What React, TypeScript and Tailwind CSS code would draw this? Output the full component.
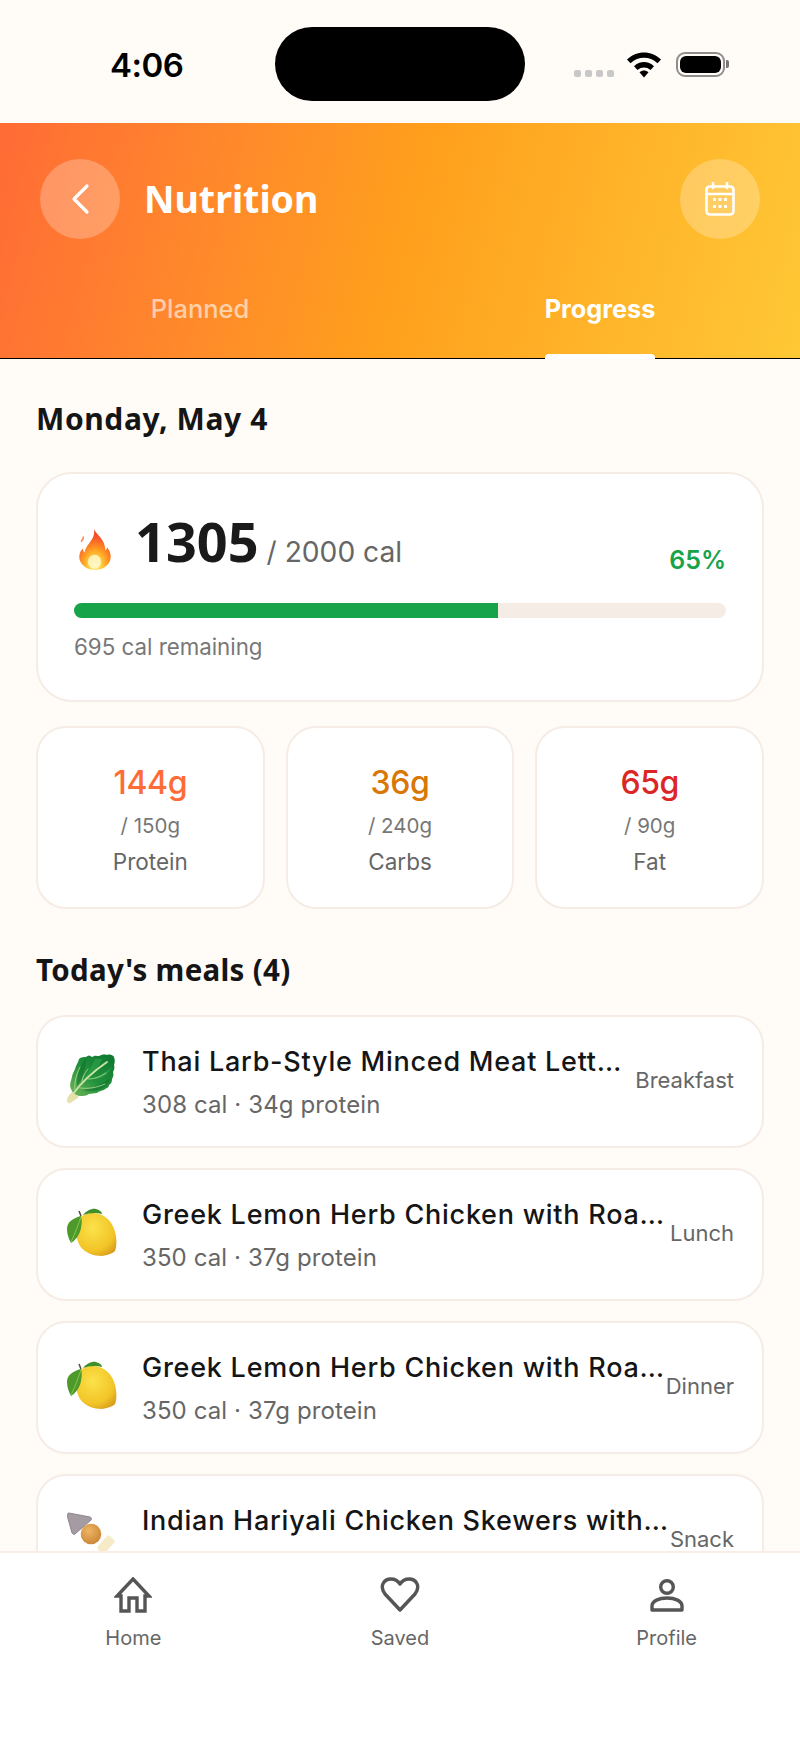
import React from "react";

const sans = "font-['Inter','Noto_Sans',sans-serif]";

function Flame() {
  return (
    <svg width="35" height="41" viewBox="0 0 33 40" className="shrink-0">
      <defs>
        <radialGradient id="fl" cx="0.5" cy="0.88" r="0.9">
          <stop offset="0" stopColor="#fff8c0" />
          <stop offset="0.2" stopColor="#ffd53f" />
          <stop offset="0.45" stopColor="#ff9a22" />
          <stop offset="0.75" stopColor="#f9532a" />
          <stop offset="1" stopColor="#f0381f" />
        </radialGradient>
      </defs>
      <path d="M16 0c2 5 8 8 10 15 1 3 1 5 1 6 1-1 2-3 2-3 3 4 4 8 3 12-2 6-8 10-15 10S4 36 2 30c-1-4 0-8 3-11 0 2 1 3 2 4 0-3 2-6 5-10 3-4 5-8 4-13z" fill="url(#fl)" />
      <path d="M5 7c0 2-2 3-2 6 2-1 4-3 3-6z" fill="#f8733c" opacity="0.8" />
      <ellipse cx="16.500" cy="32" rx="6.500" ry="7" fill="#fff7c8" opacity="0.85" />
    </svg>
  );
}

function Lettuce() {
  return (
    <svg width="52" height="52" viewBox="0 0 52 52" className="shrink-0">
      <defs>
        <linearGradient id="le" x1="0" y1="1" x2="1" y2="0">
          <stop offset="0" stopColor="#74b75a" />
          <stop offset="0.45" stopColor="#22923d" />
          <stop offset="1" stopColor="#0e7530" />
        </linearGradient>
      </defs>
      <path d="M5 36c-2-4 0-8 1-12 0-3 2-5 3-8 1-4 3-6 4-10 2-2 5-2 7-2 2-2 4-2 6 0 3-2 5-1 7-1 2-1 5-2 8-1 3-1 6 0 7 2 1 3 1 5 0 8 1 3 0 5-1 7 1 3 0 5-1 7 0 3-1 5-3 6 0 3-3 3-5 5-3 1-5 1-7 3-3 0-5 1-8 1-3 2-6 2-8 2-5 0-8-2-10-7z" fill="url(#le)" />
      <path d="M20 5c-6 7-9 16-9 28 5-6 9-17 9-28zM44 25c-7 6-17 10-27 12 10 3 23 1 27-12z" fill="#0f6f2c" opacity="0.55" />
      <path d="M29 6c-3 7-6 13-11 21 7-4 14-11 18-21zM46 14c-6 4-12 9-20 12 8 1 16-3 20-12z" fill="#2fa24b" opacity="0.6" />
      <path d="M7 41C15 30 25 20 41 9" stroke="#cbe5a6" strokeWidth="1.800" fill="none" strokeLinecap="round" />
      <path d="M9 38C8 30 10 22 14 14M16 31c0-6 2-10 6-15M22 26c6 0 12-2 18-6M14 35c8 1 16 0 25-4" stroke="#b5dc92" strokeWidth="1" fill="none" strokeLinecap="round" opacity="0.8" />
      <path d="M1 47c0-3 3-6 5-8l7 5c-3 2-7 5-9 6-2 1-3-1-3-3z" fill="#e6e0ac" />
    </svg>
  );
}

function Lemon({ id }: { id: string }) {
  return (
    <svg width="50" height="48" viewBox="0 0 50 48" className="shrink-0">
      <defs>
        <radialGradient id={id} cx="0.42" cy="0.35" r="0.75">
          <stop offset="0" stopColor="#fbe24a" />
          <stop offset="0.7" stopColor="#f2c527" />
          <stop offset="1" stopColor="#d79a1a" />
        </radialGradient>
      </defs>
      <path d="M11 12c5-7 16-9 24-5 8 4 13 12 14 22 1 6 0 11-1 14-3 3-8 4-13 5-8 0-17-3-22-10C9 31 7 19 11 12z" fill={`url(#${id})`} />
      <path d="M14 8C6 10 0 14 0 21c0 6 2 10 4 14 5-3 9-9 10-15 1-5 1-9 0-12z" fill="#4d9a2a" />
      <path d="M14 9C11 17 8 26 4 34" stroke="#8cc152" strokeWidth="1" fill="none" />
      <path d="M16 7c3-4 9-7 13-6 4 1 6 3 6 5-6-2-13-1-19 1z" fill="#3f8f2b" />
      <path d="M12 3l2 5" stroke="#5a4a30" strokeWidth="1.500" />
    </svg>
  );
}

function Skewer() {
  return (
    <svg width="50" height="52" viewBox="0 0 50 52" className="shrink-0">
      <defs>
        <radialGradient id="ba" cx="0.4" cy="0.35" r="0.7">
          <stop offset="0" stopColor="#efb466" />
          <stop offset="1" stopColor="#c98634" />
        </radialGradient>
      </defs>
      <path d="M2 1l21 4c1 0 2 2 1 3L8 22c-1 1-2 0-3-1L0 3c0-1 1-2 2-2z" fill="#a59ca3" stroke="#8f868e" strokeWidth="1" />
      <circle cx="24" cy="22" r="10.300" fill="url(#ba)" />
      <path d="M31 34l9-10c1-1 2-1 3 0l4 4c1 1 1 2 0 3l-9 10c-3 2-9-3-7-7z" fill="#f5ebc9" />
    </svg>
  );
}

function Meal({ icon, title, sub, tag }: { icon: React.ReactNode; title: string; sub: string; tag: string }) {
  return (
    <div className="flex items-center h-[133px] shrink-0 rounded-[30px] bg-white border-2 border-[#f5ece5] pl-[28px] pr-[28px]">
      <div className="w-[52px] mb-[5px] flex justify-center shrink-0">{icon}</div>
      <div className="ml-[24px] mt-[1px] flex-1 min-w-0 flex flex-col gap-[13px]">
        <div className="truncate text-[27px] leading-[32px] font-medium text-[#151515] tracking-[0.75px]">{title}</div>
        <div className="truncate text-[24px] leading-[28px] text-[#666] tracking-[0.1px]">{sub}</div>
      </div>
      <div className="shrink-0 mb-[3px] text-[22px] leading-[26px] text-[#666]">{tag}</div>
    </div>
  );
}

function Macro({ value, goal, label, color }: { value: string; goal: string; label: string; color: string }) {
  return (
    <div className="flex-1 h-[183px] rounded-[30px] bg-white border-2 border-[#f5ece5] flex flex-col items-center pt-[33px]">
      <div className={`text-[32px] leading-[44px] font-medium tracking-[-0.4px] ${color}`}>{value}</div>
      <div className="mt-[9px] text-[20.500px] leading-[24px] text-[#777]">{goal}</div>
      <div className="mt-[11px] text-[22.500px] leading-[26px] text-[#666]">{label}</div>
    </div>
  );
}

export default function App() {
  return (
    <div className={`w-[800px] h-[1739px] flex flex-col overflow-hidden bg-[#fffbf7] ${sans}`}>
      {/* status bar */}
      <div className="h-[123px] shrink-0 bg-[#fffcf8] relative flex items-start">
        <div className="ml-[110px] mt-[44px] text-[33px] leading-[42px] font-semibold text-black tracking-[-0.5px]">4:06</div>
        <div className="absolute left-[275px] top-[27px] w-[250px] h-[74px] rounded-[37px] bg-black" />
        <div className="absolute left-[574px] top-[70px] flex gap-[4px]">
          <div className="w-[7px] h-[7px] rounded-[2px] bg-[#c8c8c8]" />
          <div className="w-[7px] h-[7px] rounded-[2px] bg-[#c8c8c8]" />
          <div className="w-[7px] h-[7px] rounded-[2px] bg-[#c8c8c8]" />
          <div className="w-[7px] h-[7px] rounded-[2px] bg-[#c8c8c8]" />
        </div>
        <svg width="34" height="26" viewBox="0 0 34 26" className="absolute left-[627px] top-[52px]">
          <path d="M0 7.500C9.500-2 24.500-2 34 7.500l-3.500 3.800C22.500 4 11.500 4 3.500 11.300z" fill="#000" />
          <path d="M7 14.200c6-5.500 14-5.500 20 0l-3.500 3.800c-4-3.300-9-3.300-13 0z" fill="#000" />
          <path d="M12.500 20.300c3-2.300 6-2.300 9 0L17 25.500z" fill="#000" />
        </svg>
        <div className="absolute left-[676px] top-[52px] w-[49px] h-[25px] rounded-[9px] border-2 border-[#8e8e8e] p-[2px]">
          <div className="w-full h-full rounded-[6px] bg-black" />
        </div>
        <div className="absolute left-[726px] top-[60px] w-[3px] h-[8px] rounded-r-[2px] bg-[#777]" />
      </div>

      {/* header */}
      <div className="h-[236px] shrink-0 border-b border-black bg-linear-105 from-[#ff6b35] via-[#ff9f1c] to-[#ffc835] flex flex-col">
        <div className="flex items-center justify-between pl-[40px] pr-[40px] pt-[36px]">
          <div className="flex items-center gap-[24px]">
            <div className="w-[80px] h-[80px] rounded-full bg-white/25 flex items-center justify-center">
              <svg width="22" height="32" viewBox="0 0 22 32">
                <path d="M18 3L5 16l13 13" stroke="#fff" strokeWidth="3.200" fill="none" strokeLinecap="round" strokeLinejoin="round" />
              </svg>
            </div>
            <div className="font-['Noto_Sans',sans-serif] text-[37.500px] leading-[46px] font-bold text-white">Nutrition</div>
          </div>
          <div className="w-[80px] h-[80px] rounded-full bg-white/25 flex items-center justify-center">
            <svg width="30" height="34" viewBox="0 0 30 34" fill="none">
              <rect x="1.500" y="4.500" width="27" height="28" rx="3.500" stroke="#fff" strokeWidth="2.600" />
              <path d="M1.500 12h27M8 1v5M22 1v5" stroke="#fff" strokeWidth="2.600" strokeLinecap="round" />
              <g fill="#fff">
                <rect x="8" y="16" width="3" height="3" rx="0.500" />
                <rect x="13.500" y="16" width="3" height="3" rx="0.500" />
                <rect x="19" y="16" width="3" height="3" rx="0.500" />
                <rect x="8" y="23" width="3" height="3" rx="0.500" />
                <rect x="13.500" y="23" width="3" height="3" rx="0.500" />
                <rect x="19" y="23" width="3" height="3" rx="0.500" />
              </g>
            </svg>
          </div>
        </div>
        <div className="flex mt-[53px] flex-1">
          <div className="flex-1 flex flex-col items-center">
            <div className="text-[25.500px] leading-[34px] font-medium text-white/60">Planned</div>
          </div>
          <div className="flex-1 flex flex-col items-center relative">
            <div className="text-[25.300px] leading-[34px] font-bold text-white">Progress</div>
            <div className="absolute bottom-[-1px] w-[110px] h-[5px] bg-white rounded-t-[4px]" />
          </div>
        </div>
      </div>

      {/* content */}
      <div className="flex-1 min-h-0 overflow-hidden px-[36px] flex flex-col">
        <div className="mt-[42px] font-['Noto_Sans',sans-serif] text-[30px] leading-[36px] font-bold text-[#151515] tracking-[0.6px]">Monday, May 4</div>
        <div className="mt-[35px] h-[230px] shrink-0 rounded-[36px] bg-white border-2 border-[#f5ece5] px-[36px] pt-[37px]">
          <div className="flex items-start justify-between">
            <div className="flex items-start">
              <div className="ml-[3px] mt-[18px]">
                <Flame />
              </div>
              <div className="ml-[23px] flex items-baseline">
                <span className="font-['Noto_Sans',sans-serif] text-[54px] leading-[60px] font-bold text-[#1a1a1a]">1305</span>
                <span className="ml-[8px] text-[28.200px] leading-[32px] text-[#666]">/ 2000 cal</span>
              </div>
            </div>
            <div className="text-[25px] leading-[30px] font-semibold text-[#16a34a] mt-[34px]">65%</div>
          </div>
          <div className="mt-[28px] h-[15px] rounded-full bg-[#f5ece5] overflow-hidden">
            <div className="h-full bg-[#16a34a] w-[65%]" />
          </div>
          <div className="mt-[16px] text-[22.300px] leading-[26px] text-[#777]">695 cal remaining</div>
        </div>
        <div className="mt-[24px] flex gap-[21px] shrink-0">
          <Macro value="144g" goal="/ 150g" label="Protein" color="text-[#ff6b35]" />
          <Macro value="36g" goal="/ 240g" label="Carbs" color="text-[#d97706]" />
          <Macro value="65g" goal="/ 90g" label="Fat" color="text-[#dc2626]" />
        </div>
        <div className="mt-[43px] font-['Noto_Sans',sans-serif] text-[29.500px] leading-[36px] font-bold text-[#151515] tracking-[0.3px]">Today's meals (4)</div>
        <div className="mt-[27px] flex flex-col gap-[20px]">
          <Meal icon={<Lettuce />} title="Thai Larb-Style Minced Meat Lettuce Wraps" sub="308 cal · 34g protein" tag="Breakfast" />
          <Meal icon={<Lemon id="l1" />} title="Greek Lemon Herb Chicken with Roasted Veg" sub="350 cal · 37g protein" tag="Lunch" />
          <Meal icon={<Lemon id="l2" />} title="Greek Lemon Herb Chicken with Roasted Veg" sub="350 cal · 37g protein" tag="Dinner" />
          <Meal icon={<Skewer />} title="Indian Hariyali Chicken Skewers with Raita" sub="320 cal · 40g protein" tag="Snack" />
        </div>
      </div>

      {/* nav */}
      <div className="h-[188px] shrink-0 bg-white border-t-2 border-[#f8ede7] flex pt-[24px]">
        <div className="flex-1 flex flex-col items-center">
          <svg width="38" height="36" viewBox="0 0 38 36" fill="none">
            <path d="M19 2L35 19H31V34H23V21H15V34H7V19H3Z" stroke="#555" strokeWidth="3.400" strokeLinejoin="miter" />
          </svg>
          <div className="mt-[13px] text-[20px] leading-[24px] text-[#666]">Home</div>
        </div>
        <div className="flex-1 flex flex-col items-center">
          <svg width="40" height="36" viewBox="0 0 40 36" fill="none">
            <path d="M20 33L5 17C-1 9 4 2 11 2C15 2 18 4 20 7C22 4 25 2 29 2C36 2 41 9 35 17Z" stroke="#555" strokeWidth="3.400" strokeLinejoin="round" />
          </svg>
          <div className="mt-[13px] text-[20px] leading-[24px] text-[#666]">Saved</div>
        </div>
        <div className="flex-1 flex flex-col items-center">
          <svg width="36" height="36" viewBox="0 0 36 36" fill="none">
            <circle cx="18" cy="10" r="6.300" stroke="#555" strokeWidth="3.400" />
            <path d="M3 33v-4c0-5 7-8 15-8s15 3 15 8v4z" stroke="#555" strokeWidth="3.400" strokeLinejoin="round" />
          </svg>
          <div className="mt-[13px] text-[20px] leading-[24px] text-[#666]">Profile</div>
        </div>
      </div>
    </div>
  );
}
